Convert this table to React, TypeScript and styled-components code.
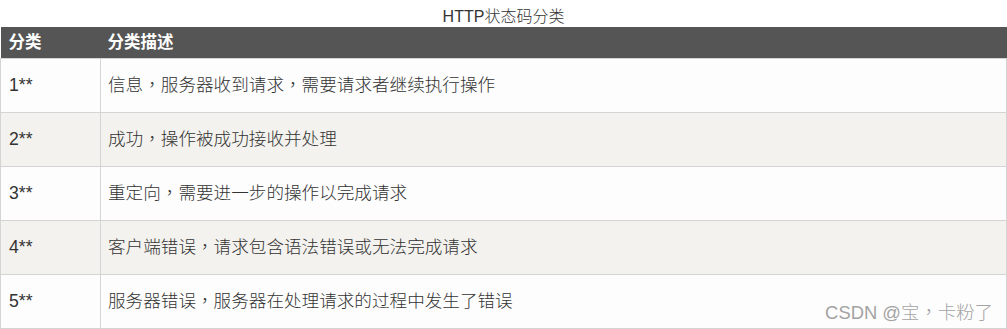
import styled, { createGlobalStyle } from "styled-components";

const GlobalStyle = createGlobalStyle`
  html, body {
    margin: 0;
    padding: 0;
    background: #ffffff;
  }
`;

const Page = styled.div`
  position: relative;
  width: 1007px;
  height: 329px;
  overflow: hidden;
  font-family: "Liberation Sans", "Noto Sans CJK SC", sans-serif;
  color: #333333;
`;

const Table = styled.table`
  width: 1007px;
  border-collapse: collapse;
  table-layout: fixed;
`;

const Caption = styled.caption`
  height: 27px;
  line-height: 33px;
  font-size: 16px;
  font-weight: 300;
  color: #333333;
  text-align: center;
  white-space: nowrap;
`;

const HeadCell = styled.th<{ $first?: boolean }>`
  height: 31px;
  padding: 0 ${(p) => (p.$first ? "8px" : "7px")};
  background: #555555;
  color: #ffffff;
  font-size: 16.5px;
  font-weight: bold;
  text-align: left;
  line-height: 29px;
`;

const Row = styled.tr<{ $shade: boolean }>`
  background: ${(p) => (p.$shade ? "#f3f2ee" : "#fdfdfd")};
`;

const Cell = styled.td<{ $first?: boolean }>`
  height: 51px;
  padding: 0 ${(p) => (p.$first ? "8px" : "7px")} 2px;
  border: 1px solid #d4d4d4;
  font-size: 17.6px;
  font-weight: 300;
  line-height: 24px;
  vertical-align: middle;
  white-space: nowrap;
`;

// full-width commas sit centred in the reference font
const Punct = styled.span`
  font-family: "Noto Sans CJK TC", sans-serif;
`;

const Watermark = styled.div`
  position: absolute;
  right: 14px;
  top: 298px;
  font-size: 18.4px;
  font-weight: 300;
  color: #a3a3a3;
  text-shadow: 0 0 1px #ffffff;
  white-space: nowrap;
`;

const rows = [
  { code: "1**", desc: "信息，服务器收到请求，需要请求者继续执行操作" },
  { code: "2**", desc: "成功，操作被成功接收并处理" },
  { code: "3**", desc: "重定向，需要进一步的操作以完成请求" },
  { code: "4**", desc: "客户端错误，请求包含语法错误或无法完成请求" },
  { code: "5**", desc: "服务器错误，服务器在处理请求的过程中发生了错误" },
];

function withCommas(text: string) {
  const parts = text.split("，");
  return parts.map((p, i) => (
    <span key={i}>
      {p}
      {i < parts.length - 1 && <Punct>，</Punct>}
    </span>
  ));
}

export default function App() {
  return (
    <Page>
      <GlobalStyle />
      <Table>
        <Caption>HTTP状态码分类</Caption>
        <colgroup>
          <col style={{ width: 100 }} />
          <col />
        </colgroup>
        <thead>
          <tr>
            <HeadCell $first>分类</HeadCell>
            <HeadCell>分类描述</HeadCell>
          </tr>
        </thead>
        <tbody>
          {rows.map((r, i) => (
            <Row key={r.code} $shade={i % 2 === 1}>
              <Cell $first>{r.code}</Cell>
              <Cell>{withCommas(r.desc)}</Cell>
            </Row>
          ))}
        </tbody>
      </Table>
      <Watermark>CSDN @{withCommas("宝，卡粉了")}</Watermark>
    </Page>
  );
}
